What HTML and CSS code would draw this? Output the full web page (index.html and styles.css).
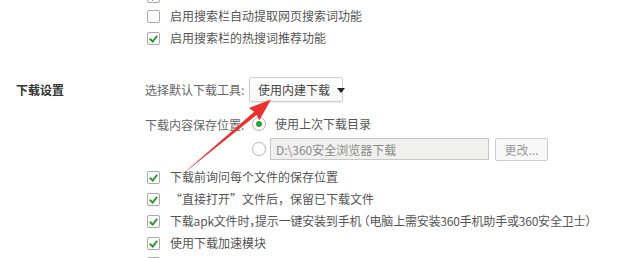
FILE: index.html
```html
<!DOCTYPE html>
<html>
<head>
<meta charset="utf-8">
<link rel="stylesheet" href="styles.css">
</head>
<body>
<div class="page">
  <div class="list top-list">
    <div class="row first"><span class="cb checked"></span></div>
    <div class="row"><span class="cb"></span><span class="txt">启用搜索栏自动提取网页搜索词功能</span></div>
    <div class="row"><span class="cb checked"></span><span class="txt">启用搜索栏的热搜词推荐功能</span></div>
  </div>

  <div class="section">
    <div class="sec-title">下载设置</div>
    <div class="sec-body">
      <div class="line line-a">
        <span class="lbl">选择默认下载工具:</span>
        <span class="dropdown">使用内建下载<span class="caret"></span></span>
      </div>
      <div class="line line-b">
        <span class="lbl">下载内容保存位置:</span>
        <span class="radio on"></span>
        <span class="txt">使用上次下载目录</span>
      </div>
      <div class="line line-c">
        <span class="lbl"></span>
        <span class="radio"></span>
        <span class="path">D:\360安全浏览器下载</span>
        <span class="btn">更改...</span>
      </div>
      <div class="list bottom-list">
        <div class="row"><span class="cb checked"></span><span class="txt">下载前询问每个文件的保存位置</span></div>
        <div class="row"><span class="cb checked"></span><span class="txt">“直接打开”文件后，保留已下载文件</span></div>
        <div class="row"><span class="cb checked"></span><span class="txt tight">下载apk文件时<span class="hw">，</span>提示一键安装到手机 <span class="hw">（</span>电脑上需安装360手机助手或360安全卫士<span class="hw">）</span></span></div>
        <div class="row"><span class="cb checked"></span><span class="txt">使用下载加速模块</span></div>
        <div class="row last"><span class="cb checked"></span></div>
      </div>
    </div>
  </div>

  <svg class="arrow" width="620" height="258" viewBox="0 0 620 258">
    <polygon points="184.4,172.7 185.8,171.3 254.2,111.8 249,108 271,99.5 259.4,120.2 256.6,115" fill="#e8322e"/>
  </svg>
</div>
</body>
</html>
```

FILE: styles.css
```css
html, body {
  margin: 0;
  padding: 0;
  background: #ffffff;
}
body {
  width: 620px;
  height: 258px;
  overflow: hidden;
  font-family: "Noto Sans CJK SC", "Noto Sans", sans-serif;
  font-size: 12px;
  color: #555;
}
.page {
  position: relative;
  width: 620px;
  height: 258px;
  overflow: hidden;
}
.list {
  display: flex;
  flex-direction: column;
}
.top-list {
  margin-top: -17px;
  padding-left: 147px;
}
.row {
  height: 22px;
  display: flex;
  align-items: center;
  white-space: nowrap;
}
.row.first {
  align-items: flex-end;
  padding-bottom: 2px;
  box-sizing: border-box;
}
.row.last {
  margin-top: -2px;
}
.cb {
  box-sizing: border-box;
  width: 13px;
  height: 13px;
  border: 1px solid #a8a8a8;
  border-radius: 2px;
  background: #fff;
  margin-right: 10px;
  flex: none;
  position: relative;
}
.cb.checked::after {
  content: "";
  position: absolute;
  left: 3px;
  top: 1px;
  width: 3px;
  height: 6px;
  border-right: 2px solid #2f9a35;
  border-bottom: 2px solid #2f9a35;
  transform: rotate(40deg);
}
.txt {
  color: #555;
  line-height: 16px;
}
.txt.tight {
  letter-spacing: -0.2px;
}
.hw {
  font-feature-settings: "halt";
}
.section {
  display: flex;
  margin-top: 28px;
}
.sec-title {
  width: 129px;
  padding-left: 16px;
  font-weight: bold;
  color: #333;
  font-size: 12px;
  height: 25px;
  line-height: 25px;
  flex: none;
}
.sec-body {
  display: flex;
  flex-direction: column;
}
.line {
  display: flex;
  align-items: center;
  white-space: nowrap;
}
.line-a { height: 25px; }
.line-b { height: 22px; margin-top: 11px; }
.line-c { height: 24px; margin-top: 2px; }
.lbl {
  width: 104px;
  flex: none;
  color: #666;
}
.dropdown {
  box-sizing: border-box;
  width: 94px;
  height: 25px;
  border: 1px solid #cfcfcf;
  border-radius: 2px;
  background: linear-gradient(#ffffff, #f7f7f7);
  box-shadow: 0 1px 1px rgba(0,0,0,0.08);
  display: flex;
  align-items: center;
  padding-left: 8px;
  color: #444;
}
.caret {
  width: 0;
  height: 0;
  border-left: 4px solid transparent;
  border-right: 4px solid transparent;
  border-top: 5px solid #222;
  margin-left: 7px;
  margin-top: 1px;
}
.radio {
  box-sizing: border-box;
  width: 14px;
  height: 14px;
  border: 1px solid #b8b8b8;
  border-radius: 50%;
  background: #fff;
  margin-left: 3px;
  margin-right: 7px;
  flex: none;
  display: flex;
  align-items: center;
  justify-content: center;
  box-shadow: 0 0 1px rgba(0,0,0,0.1);
}
.radio.on::after {
  content: "";
  width: 6px;
  height: 6px;
  border-radius: 50%;
  background: #2fa33a;
}
.line-b .txt { margin-left: 2px; }
.line-c .radio { margin-right: 4px; }
.path {
  box-sizing: border-box;
  width: 219px;
  height: 22px;
  border: 1px solid #c6c6c6;
  background: #f0f0ee;
  color: #8a8a8a;
  display: flex;
  align-items: center;
  padding-left: 5px;
}
.btn {
  box-sizing: border-box;
  width: 53px;
  height: 23px;
  margin-left: 6px;
  border: 1px solid #cdcdcd;
  border-radius: 2px;
  background: #f8f8f8;
  color: #9a9a9a;
  display: flex;
  align-items: center;
  justify-content: center;
}
.bottom-list {
  margin-top: 5px;
  margin-left: 2px;
}
.arrow {
  position: absolute;
  left: 0;
  top: 0;
  pointer-events: none;
}
```
